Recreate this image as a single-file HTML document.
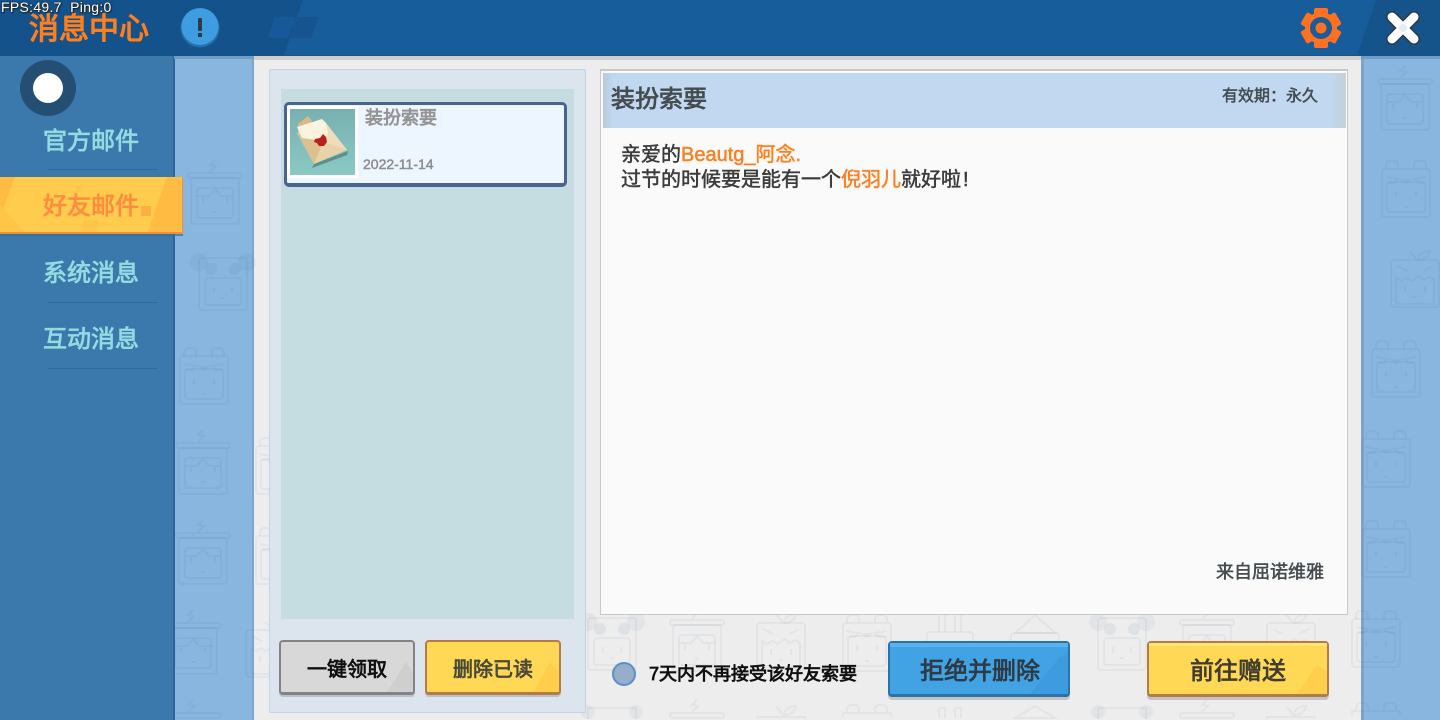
<!DOCTYPE html>
<html lang="zh"><head><meta charset="utf-8"><title>消息中心</title>
<style>
*{box-sizing:border-box}
html,body{margin:0;padding:0;width:1440px;height:720px;overflow:hidden;background:#88b6de}
body{position:relative;font-family:"Liberation Sans","Noto Sans CJK SC",sans-serif}
.a{position:absolute}
.t{position:absolute;white-space:nowrap;font-family:"Liberation Sans","WenQuanYi Zen Hei","Noto Sans CJK SC",sans-serif;-webkit-text-stroke:.5px currentColor}
.b{-webkit-text-stroke:.8px currentColor}
.btn{position:absolute;border-radius:4px;border:2px solid;overflow:hidden}
.o{color:#ff7f1e}
</style></head><body>
<div class="a" style="left:254px;top:55px;width:1107px;height:665px;background:#ededed"></div>
<div class="a" style="left:252px;top:55px;width:2px;height:665px;background:#7da6cb"></div>
<div class="a" style="left:1361px;top:55px;width:3px;height:665px;background:#7fa3c6"></div>

<svg class="a" style="left:0;top:0;overflow:hidden" width="1440" height="720" fill="none" stroke="#284f78" stroke-opacity=".05" stroke-width="2">
<defs>
<g id="pot"><path d="M27 0l-5 5 6 1-6 6"/><rect x="0" y="13" width="54" height="5" rx="2"/><rect x="3" y="18" width="48" height="46" rx="3"/><rect x="9" y="28" width="36" height="30" rx="3"/><path d="M9 36h12l6-7 6 7h12M15 36v7M39 36v7M25 52h4"/></g>
<g id="bear"><path d="M4 6V2a4 4 0 0 1 4-4h4a4 4 0 0 1 4 4v4M32 6V2a4 4 0 0 1 4-4h4a4 4 0 0 1 4 4v4"/><rect x="0" y="6" width="48" height="48" rx="3"/><rect x="5" y="19" width="38" height="30" rx="3"/><path d="M4 14l12 2-4 4-6 0M44 14l-12 2 4 4 6 0M20 17h8l-4 3zM14 28v6M34 28v6M22 44h4"/></g>
<g id="sprout"><path d="M25 10c-1-4-3-6-6-8M27 10c0-5 5-9 12-9-1 6-6 9-12 9z"/><rect x="0" y="10" width="48" height="47" rx="3"/><path d="M5 28l5 3 6-3 4 3 8-5 5 4 5-3 5 3v21a3 3 0 0 1-3 3H8a3 3 0 0 1-3-3zM6 16l10 5M42 16l-10 5M14 36v6M34 36v6M22 47h4"/></g>
<g id="panda"><circle cx="8" cy="7" r="9" fill="#284f78" fill-opacity=".05" stroke="none"/><circle cx="56" cy="7" r="9" fill="#284f78" fill-opacity=".05" stroke="none"/><rect x="8" y="3" width="48" height="52" rx="3"/><rect x="14" y="23" width="36" height="27" rx="3"/><circle cx="20" cy="14" r="6" fill="#284f78" fill-opacity=".07" stroke="none"/><circle cx="44" cy="14" r="6" fill="#284f78" fill-opacity=".07" stroke="none"/><path d="M23 32v6M41 32v6M30 43h4"/></g>
<g id="bunny"><path d="M12 20V2h6v18M28 20V2h6v18"/><rect x="0" y="20" width="46" height="40" rx="3"/></g>
<g id="tree"><path d="M24 0L4 18h40z"/><rect x="0" y="18" width="48" height="40" rx="3"/></g>
<g id="pandaT"><circle cx="8" cy="7" r="7" fill="#284f78" fill-opacity=".05" stroke="none"/><circle cx="56" cy="7" r="7" fill="#284f78" fill-opacity=".05" stroke="none"/><path d="M8 14V3h48v11"/></g>
<g id="potT"><path d="M27 0l-5 5 6 1-6 6"/><rect x="0" y="13" width="54" height="5" rx="2"/></g>
<g id="sproutT"><path d="M25 10c-1-4-3-6-6-8M27 10c0-5 5-9 12-9-1 6-6 9-12 9zM0 14v-2h48v2"/></g>
<g id="bearT"><path d="M4 6V2a4 4 0 0 1 4-4h4a4 4 0 0 1 4 4v4M32 6V2a4 4 0 0 1 4-4h4a4 4 0 0 1 4 4v4M0 10V6h48v4"/></g>
<g id="bunnyT"><path d="M12 12V2h6v10M28 12V2h6v10"/></g>
<g id="treeT"><path d="M24 0L4 12h40z"/></g>
</defs>
<use href="#pot" x="188" y="160"/><use href="#panda" x="191" y="255"/><use href="#pot" x="176" y="430"/><use href="#pot" x="176" y="520"/><use href="#pot" x="166" y="610"/><use href="#potT" x="166" y="700"/>
<use href="#bear" x="180" y="350"/><use href="#bear" x="256" y="440"/><use href="#bear" x="256" y="530"/><use href="#sprout" x="246" y="620"/>
<use href="#pot" x="1378" y="66"/><use href="#bear" x="1382" y="163"/><use href="#sprout" x="1391" y="250"/><use href="#bear" x="1372" y="343"/><use href="#bear" x="1362" y="433"/><use href="#bear" x="1362" y="523"/><use href="#bear" x="1352" y="613"/><use href="#bearT" x="1352" y="705"/>
<use href="#panda" x="580" y="615"/><use href="#pot" x="670" y="607"/><use href="#sprout" x="757" y="613"/><use href="#bear" x="843" y="617"/><use href="#bunny" x="927" y="612"/><use href="#tree" x="1011" y="615"/><use href="#panda" x="1090" y="615"/><use href="#pot" x="1180" y="607"/><use href="#sprout" x="1267" y="613"/>
<use href="#pandaT" x="580" y="705"/><use href="#potT" x="670" y="700"/><use href="#sproutT" x="757" y="705"/><use href="#bearT" x="843" y="707"/><use href="#bunnyT" x="927" y="706"/><use href="#treeT" x="1011" y="706"/><use href="#pandaT" x="1090" y="705"/><use href="#potT" x="1180" y="700"/><use href="#sproutT" x="1267" y="705"/>
</svg>

<!-- sidebar -->
<div class="a" style="left:0;top:55px;width:175px;height:665px;background:#3b78ab;border-right:2px solid #2a669c"></div>
<div class="a" style="left:48px;top:169px;width:110px;height:1px;background:#2f6a9c"></div>
<div class="a" style="left:48px;top:302px;width:110px;height:1px;background:#2f6a9c"></div>
<div class="a" style="left:48px;top:368px;width:110px;height:1px;background:#2f6a9c"></div>
<div class="a" style="left:20px;top:60px;width:56px;height:56px;border-radius:50%;background:#244f73"></div>
<div class="a" style="left:33px;top:73px;width:30px;height:30px;border-radius:50%;background:#fff"></div>
<div class="t b" style="left:43px;top:126px;font-size:24px;line-height:32px;color:#93dbe1">官方邮件</div>
<div class="a" style="left:0;top:177px;width:183px;height:59px;background:#3a6b9a;opacity:.7"></div>
<svg class="a" style="left:0;top:177px" width="183" height="58">
<rect width="183" height="57" fill="#ffcc4d"/>
<polygon points="0,0 15,0 0,40" fill="#ffbc42"/><polygon points="0,27 26,57 0,57" fill="#ffc547"/>
<polygon points="167,0 183,0 183,57 147,57" fill="#ffbb42"/>
<rect x="76" y="8" width="7" height="7" fill="#ffc548"/><rect x="83" y="43" width="16" height="12" fill="#ffc548"/>
<rect x="141" y="29" width="10" height="10" fill="#ffb042"/>
<rect y="55" width="183" height="2" fill="#e8943a"/><rect x="182" width="1" height="57" fill="#e8943a"/>
</svg>
<div class="t b" style="left:43px;top:191px;font-size:24px;line-height:32px;color:#ff8c3f">好友邮件</div>
<div class="t b" style="left:43px;top:258px;font-size:24px;line-height:32px;color:#93dbe1">系统消息</div>
<div class="t b" style="left:43px;top:324px;font-size:24px;line-height:32px;color:#93dbe1">互动消息</div>

<!-- top bar -->
<div class="a" style="left:254px;top:56px;width:1107px;height:4px;background:#cfcfcf"></div>
<div class="a" style="left:174px;top:56px;width:80px;height:3px;background:#6f9dc6"></div>
<div class="a" style="left:1361px;top:56px;width:79px;height:3px;background:#6f9dc6"></div>
<div class="a" style="left:0;top:0;width:1440px;height:56px;background:#175d9b;border-bottom:1px solid #1a5385"></div>
<svg class="a" style="left:0;top:0" width="1440" height="56">
<polygon points="0,0 303,0 284,55 0,55" fill="#14528b"/>
<polygon points="275,17 296,17 288,38 268,38" fill="#17589a"/><polygon points="298,17 319,17 311,38 290,38" fill="#15548f"/>
<polygon points="1376,0 1440,0 1440,55 1357,55" fill="#15538b"/>
<g transform="translate(1321 28)"><g fill="#ff7020"><circle r="16"/><rect x="-7" y="-20" width="14" height="10" rx="2"/><rect x="-7" y="-20" width="14" height="10" rx="2" transform="rotate(60)"/><rect x="-7" y="-20" width="14" height="10" rx="2" transform="rotate(120)"/><rect x="-7" y="-20" width="14" height="10" rx="2" transform="rotate(180)"/><rect x="-7" y="-20" width="14" height="10" rx="2" transform="rotate(240)"/><rect x="-7" y="-20" width="14" height="10" rx="2" transform="rotate(300)"/></g><circle r="11" fill="#185c98"/><circle r="5.5" fill="#ff7020"/></g>
<g transform="translate(1403 28)"><path d="M-11-11L11 11M11-11L-11 11" stroke="#2a3a4a" stroke-width="12" stroke-linecap="round"/><path d="M-11-11L11 11M11-11L-11 11" stroke="#fff" stroke-width="9" stroke-linecap="round"/><circle r="4" fill="#dfeef4"/></g>
<circle cx="200" cy="28" r="19.5" fill="#2a6ea8"/><circle cx="200" cy="26.5" r="18.5" fill="#3e9de0"/>
<rect x="198" y="18" width="4" height="13" rx="1" fill="#2d3a4a"/><rect x="198" y="33" width="4" height="4" fill="#2d3a4a"/>
</svg>
<div class="t" style="left:29px;top:10px;font-size:30px;line-height:40px;color:#ff7f1e;-webkit-text-stroke:1.1px #ff7f1e">消息中心</div>
<div class="t" style="left:1px;top:-2px;font-family:'Liberation Sans',sans-serif;font-size:14px;line-height:18px;letter-spacing:.3px;color:#fff;-webkit-text-stroke:0;text-shadow:0 0 2px #222,0 0 1px #222,1px 1px 1px #222;white-space:pre">FPS:49.7  Ping:0</div>

<!-- left panel -->
<div class="a" style="left:269px;top:69px;width:317px;height:644px;background:#dce4ee;border:1px solid #c0d4e4;border-radius:2px"></div>
<div class="a" style="left:281px;top:89px;width:293px;height:530px;background:#c5dde0"></div>
<div class="a" style="left:284px;top:102px;width:283px;height:85px;background:#edf6ff;border:3px solid #4a6491;border-bottom-width:4px;border-radius:5px"></div>
<div class="a" style="left:287px;top:106px;width:71px;height:72px;background:#fff"></div>
<svg class="a" style="left:290px;top:109px" width="66" height="66">
<defs><linearGradient id="tg" x1="0" y1="0" x2="0" y2="1"><stop offset="0" stop-color="#78b0b0"/><stop offset="1" stop-color="#8ac9c4"/></linearGradient></defs>
<rect width="65" height="66" fill="url(#tg)"/>
<polygon points="22,59 57,46 58,42 24,55" fill="#5f8f8c"/>
<polygon points="18,7 8,15 8,24 22,12" fill="#d9b98c"/>
<polygon points="7,24 24,55 57,41 36,14" fill="#e8d2aa"/>
<polygon points="7,24 33,33 24,55" fill="#dcc08f"/>
<polygon points="36,14 33,33 57,41" fill="#efdcbb"/>
<polygon points="7,18 32,10 36,14 38,25 33,32 12,29" fill="#fbf3df"/>
<path d="M25 30l5-1 3-4 3 3 1 5-3 4-5 0-2-3-3-1z" fill="#b5221f"/>
</svg>
<div class="t b" style="left:365px;top:105px;font-size:18px;line-height:26px;color:#949494">装扮索要</div>
<div class="t" style="left:363px;top:154px;font-size:14px;line-height:20px;color:#8e8e8e">2022-11-14</div>

<!-- right panel -->
<div class="a" style="left:600px;top:69px;width:748px;height:546px;background:#fafafa;border:1px solid #c8c8c8;border-top:2px solid #c8c8c8"></div>
<div class="a" style="left:603px;top:73px;width:743px;height:55px;background:linear-gradient(90deg,#b8cad9 0,#c1d8f0 10px,#c1d8f0 728px,#c3d2dd 738px)"></div>
<div class="t b" style="left:611px;top:84px;font-size:24px;line-height:32px;color:#444c50">装扮索要</div>
<div class="t" style="left:1222px;top:86px;font-size:16px;line-height:22px;color:#444c50">有效期&#xFF1A;永久</div>
<div class="t" style="left:621px;top:142px;font-size:20px;line-height:26px;color:#3c3c3c">亲爱的<span class="o" style="-webkit-text-stroke:.5px #ff7f1e">Beautg_阿念.</span></div>
<div class="t" style="left:621px;top:167px;font-size:20px;line-height:26px;color:#3c3c3c">过节的时候要是能有一个<span class="o" style="-webkit-text-stroke:.5px #ff7f1e">倪羽儿</span>就好啦<span style="margin-left:2px">!</span></div>
<div class="t" style="left:1216px;top:559px;font-size:18px;line-height:26px;color:#444c50">来自屈诺维雅</div>

<!-- buttons -->
<div class="btn" style="left:279px;top:640px;width:136px;height:55px;background:#d8d8d8;border-color:#838383;border-bottom-width:3px;box-shadow:0 2px 0 #b9c2cc"></div>
<svg class="a" style="left:279px;top:640px" width="136" height="55"><polygon points="127,22 134,32 134,52 108,52" fill="#cfcfcf"/></svg>
<div class="t b" style="left:307px;top:656px;font-size:20px;line-height:28px;color:#111">一键领取</div>
<div class="btn" style="left:425px;top:640px;width:136px;height:55px;background:#ffd955;border-color:#b57a45;border-bottom-width:3px;box-shadow:0 2px 0 #b9c2cc"></div>
<svg class="a" style="left:425px;top:640px" width="136" height="55"><polygon points="125,22 134,32 134,52 108,52" fill="#ffcf4c"/></svg>
<div class="t b" style="left:453px;top:656px;font-size:20px;line-height:28px;color:#4a4a3a">删除已读</div>
<div class="a" style="left:612px;top:662px;width:24px;height:24px;border-radius:50%;background:#95afc8;border:2px solid #5a8fc9"></div>
<div class="t b" style="left:649px;top:661px;font-size:18px;line-height:26px;color:#111">7天内不再接受该好友索要</div>
<div class="btn" style="left:888px;top:641px;width:182px;height:56px;background:#41a3e4;border-color:#2a72a8;border-bottom-width:3px;box-shadow:0 3px 0 #c4c4c4"></div>
<svg class="a" style="left:888px;top:641px" width="182" height="56"><polygon points="170,18 180,10 180,53 142,53" fill="#3c9cdf"/><rect x="2" y="2" width="178" height="4" fill="#5ab3ef"/></svg>
<div class="t b" style="left:920px;top:656px;font-size:24px;line-height:32px;color:#2f3a44">拒绝并删除</div>
<div class="btn" style="left:1147px;top:641px;width:182px;height:56px;background:#ffd955;border-color:#b57a45;border-bottom-width:3px;box-shadow:0 3px 0 #c4c4c4"></div>
<svg class="a" style="left:1147px;top:641px" width="182" height="56"><polygon points="170,24 180,30 180,53 150,53" fill="#ffcf4c"/><rect x="2" y="2" width="178" height="3" fill="#ffe577"/></svg>
<div class="t b" style="left:1190px;top:656px;font-size:24px;line-height:32px;color:#403c30">前往赠送</div>
</body></html>
